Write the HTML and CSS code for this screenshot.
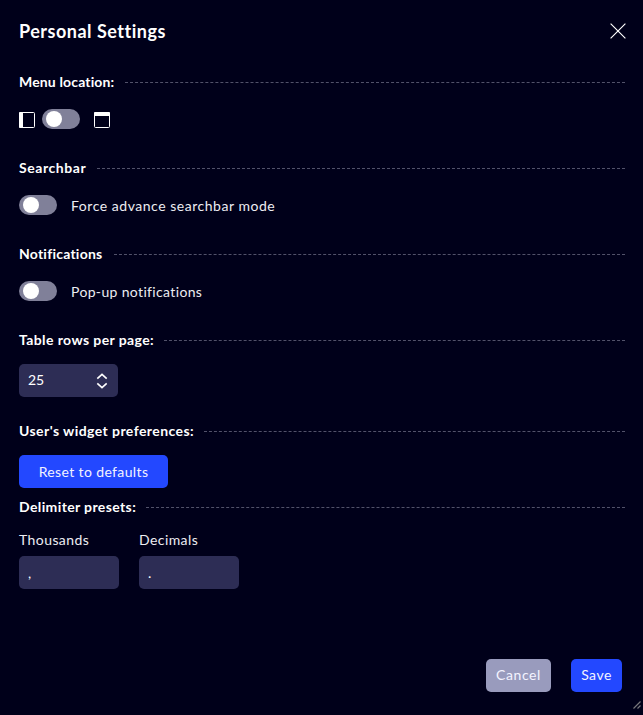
FILE: index.html
```html
<!DOCTYPE html>
<html lang="en">
<head>
<meta charset="utf-8">
<title>Personal Settings</title>
<link rel="stylesheet" href="styles.css">
</head>
<body>
<main class="dialog">
  <header class="header">
    <h1 class="title">Personal Settings</h1>
    <svg class="close" width="16" height="16" viewBox="0 0 16 16"><path d="M.6.6l14.8 14.8M15.4.6L.6 15.4" fill="none" stroke="#fff" stroke-width="1.15"/></svg>
  </header>

  <section class="section">
    <h2 class="heading"><span class="label label-menu">Menu location:</span></h2>
    <div class="row">
      <svg class="icon" width="16" height="16" viewBox="0 0 16 16"><rect x=".5" y=".5" width="15" height="15" rx="1" fill="none" stroke="#fff"/><path d="M1 0h3v16H1a1 1 0 0 1-1-1V1a1 1 0 0 1 1-1z" fill="#fff"/></svg>
      <span class="toggle toggle-menu"></span>
      <svg class="icon" width="16" height="16" viewBox="0 0 16 16"><rect x=".5" y=".5" width="15" height="15" rx="1" fill="none" stroke="#fff"/><path d="M0 4V1a1 1 0 0 1 1-1h14a1 1 0 0 1 1 1v3z" fill="#fff"/></svg>
    </div>
  </section>

  <section class="section">
    <h2 class="heading"><span class="label label-search">Searchbar</span></h2>
    <div class="row"><span class="toggle"></span><span class="option option-search">Force advance searchbar mode</span></div>
  </section>

  <section class="section">
    <h2 class="heading"><span class="label label-notify">Notifications</span></h2>
    <div class="row"><span class="toggle"></span><span class="option option-notify">Pop-up notifications</span></div>
  </section>

  <section class="section section-rows">
    <h2 class="heading"><span class="label label-rows">Table rows per page:</span></h2>
    <div class="field select"><span class="value">25</span>
      <svg width="12" height="16" viewBox="0 0 12 16"><path d="M1.3 5.7L6 1.3l4.7 4.4M1.3 10.3L6 14.7l4.7-4.4" fill="none" stroke="#fff" stroke-width="1.6"/></svg>
    </div>
  </section>

  <section class="section section-widget">
    <h2 class="heading"><span class="label label-widget">User's widget preferences:</span></h2>
    <button class="button reset">Reset to defaults</button>
  </section>

  <section class="section">
    <h2 class="heading"><span class="label label-delimiter">Delimiter presets:</span></h2>
    <div class="delimiters">
      <div class="delimiter"><span class="caption">Thousands</span><div class="field">,</div></div>
      <div class="delimiter"><span class="caption">Decimals</span><div class="field">.</div></div>
    </div>
  </section>

  <footer class="footer">
    <button class="button cancel">Cancel</button>
    <button class="button save">Save</button>
  </footer>
  <svg class="grip" width="8" height="8" viewBox="0 0 8 8"><path d="M.5 7.5l7-7M4.5 7.5l3-3" fill="none" stroke="#77777b" stroke-width="1.2"/></svg>
</main>
</body>
</html>
```
FILE: styles.css
```css
* { box-sizing: border-box; }
body { margin: 0; background: #00001a; color: #fff; font: 14px/20px Lato, sans-serif; font-variant-ligatures: none; }
.dialog { position: relative; height: 715px; padding: 18px 18px 23px 19px; display: flex; flex-direction: column; overflow: hidden; }
.header { display: flex; justify-content: space-between; align-items: center; height: 26px; margin-right: -1px; margin-bottom: 28px; }
.title { margin: 0; font-size: 18px; line-height: 26px; font-weight: 700; letter-spacing: .5px; white-space: nowrap; }
.close { display: block; }
.section { height: 86px; flex: none; }
.section-rows { height: 91px; }
.section-widget { height: 76px; }
.heading { display: flex; align-items: center; height: 20px; margin: 0 0 17px; font-size: 14px; font-weight: 700; white-space: nowrap; }
.heading::after { content: ""; flex: 1; margin-left: 10px; border-top: 1px dashed #52526a; position: relative; top: .5px; }
.label { flex: none; }
.label-menu { width: 96px; letter-spacing: .15px; }
.label-search { width: 68px; letter-spacing: .57px; }
.label-notify { width: 85px; letter-spacing: .23px; }
.label-rows { width: 135px; letter-spacing: .4px; }
.label-widget { width: 175px; letter-spacing: .43px; }
.label-delimiter { width: 117px; letter-spacing: .38px; }
.row { display: flex; align-items: center; height: 20px; }
.icon { flex: none; margin-top: 2px; }
.toggle { width: 38px; height: 20px; padding: 2px 4px; border-radius: 10px; background: #808099; flex: none; }
.toggle::before { content: ""; display: block; width: 16px; height: 16px; border-radius: 50%; background: #fff; }
.toggle-menu { margin: 0 14px 0 7px; }
.option { margin: 2px 0 0 14px; white-space: nowrap; color: #ededf2; }
.option-search { letter-spacing: .53px; }
.option-notify { letter-spacing: .35px; }
.field { display: flex; align-items: center; width: 100px; height: 33px; padding: 0 9px; border-radius: 5px; background: #2d2d55; }
.select { width: 99px; justify-content: space-between; padding-right: 10px; }
.value { margin-top: -2px; }
.section-rows .heading, .section-widget .heading { margin-bottom: 14px; }
.button { height: 33px; padding: 0; border: 0; border-radius: 5px; color: #f3f3ff; font: 14px/20px Lato, sans-serif; white-space: nowrap; }
.reset { width: 149px; background: #2348ff; letter-spacing: .37px; }
.delimiters { display: flex; gap: 20px; margin-top: -4px; }
.caption { display: block; height: 26px; letter-spacing: .42px; color: #ededf2; }
.footer { display: flex; justify-content: flex-end; gap: 20px; margin: auto 3px 0 0; }
.cancel { width: 65px; padding-bottom: 2px; background: #999bbd; letter-spacing: .6px; }
.save { width: 51px; padding-bottom: 2px; background: #2348ff; letter-spacing: .5px; }
.grip { position: absolute; right: 2px; bottom: 6px; }
```
